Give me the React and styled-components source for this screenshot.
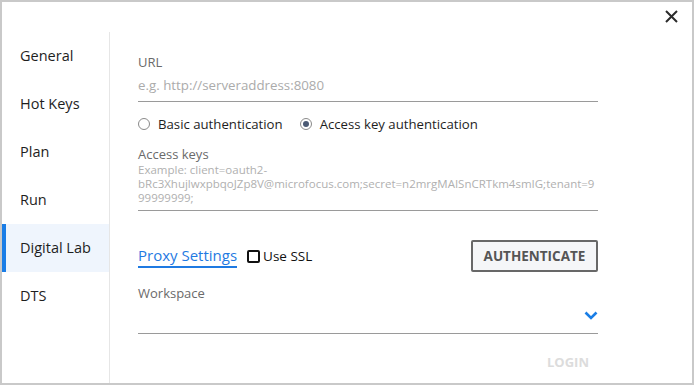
import React from 'react';
import styled, { createGlobalStyle } from 'styled-components';

const GlobalStyle = createGlobalStyle`
  html, body { margin: 0; padding: 0; background: #fff; }
  * { box-sizing: border-box; }
  body { font-family: "Open Sans", "Noto Sans", sans-serif; }
`;

const Window = styled.div`
  position: relative;
  width: 694px;
  height: 385px;
  border: 2px solid #c9c9c9;
  background: #fff;
  display: flex;
  flex-direction: column;
`;

const CloseButton = styled.button`
  position: absolute;
  top: 5px;
  right: 12px;
  width: 18px;
  height: 18px;
  padding: 0;
  border: 0;
  background: none;
  display: flex;
  align-items: center;
  justify-content: center;
  cursor: pointer;
`;

const Body = styled.div`
  display: flex;
  flex: 1;
  margin-top: 30px;
`;

const Sidebar = styled.nav`
  width: 108px;
  border-right: 1px solid #e6e6e6;
  display: flex;
  flex-direction: column;
`;

const NavItem = styled.div`
  height: 48px;
  display: flex;
  align-items: center;
  padding-left: 14px;
  padding-bottom: 1px;
  border-left: 4px solid ${(p) => (p.$active ? '#1a7de6' : 'transparent')};
  background: ${(p) => (p.$active ? '#eff5fd' : 'transparent')};
  font-size: 14.5px;
  color: #1e1e1e;
`;

const Content = styled.div`
  flex: 1;
  padding-left: 28px;
  padding-right: 94px;
  display: flex;
  flex-direction: column;
`;

const Label = styled.div`
  font-size: 13px;
  line-height: 18px;
  color: #6a6a6a;
  margin-top: ${(p) => p.$top || 0}px;
`;

const Input = styled.div`
  margin-top: 4px;
  font-size: 13.3px;
  line-height: 20px;
  color: #ababab;
  padding-bottom: 6px;
  border-bottom: 1px solid #9a9a9a;
`;

const RadioRow = styled.div`
  display: flex;
  align-items: center;
  gap: 17px;
  height: 20px;
  margin-top: 12px;
`;

const RadioOption = styled.label`
  display: flex;
  align-items: center;
  gap: 8px;
  font-size: 13.2px;
  color: #1e1e1e;
`;

const RadioCircle = styled.span`
  width: 12px;
  height: 12px;
  border-radius: 50%;
  border: 1px solid #8a8a8a;
  display: flex;
  align-items: center;
  justify-content: center;
  &::after {
    content: '';
    width: 6px;
    height: 6px;
    border-radius: 50%;
    background: ${(p) => (p.$checked ? '#4b5a74' : 'transparent')};
  }
`;

const KeyText = styled.div`
  font-size: 11.5px;
  line-height: 14px;
  color: #b0b0b0;
  padding-bottom: 5px;
  border-bottom: 1px solid #9a9a9a;
  white-space: nowrap;
  overflow: hidden;
`;

const ActionRow = styled.div`
  display: flex;
  align-items: center;
  height: 32px;
  margin-top: 29px;
`;

const ProxyLink = styled.a`
  font-size: 15px;
  line-height: 20px;
  color: #1f7ae2;
  border-bottom: 2px solid #1f7ae2;
  padding-bottom: 1px;
  margin-top: 0;
  text-decoration: none;
`;

const CheckLabel = styled.label`
  display: flex;
  align-items: center;
  gap: 3px;
  margin-left: 10px;
  font-size: 13.5px;
  color: #111;
`;

const CheckBox = styled.span`
  width: 13px;
  height: 13px;
  border: 2px solid #111;
  border-radius: 2px;
`;

const OutlineButton = styled.button`
  margin-left: auto;
  height: 32px;
  width: 127px;
  border: 2px solid #686868;
  border-radius: 2px;
  background: #f5f6f8;
  color: #555;
  font-family: inherit;
  font-weight: 700;
  font-size: 13.5px;
  padding: 0;
`;

const Select = styled.div`
  height: 32px;
  padding-bottom: 5px;
  border-bottom: 1px solid #9a9a9a;
  display: flex;
  align-items: center;
  justify-content: flex-end;
`;

const Footer = styled.div`
  display: flex;
  justify-content: flex-end;
  margin-top: 18px;
  padding-right: 9px;
`;

const TextButton = styled.button`
  border: 0;
  background: none;
  padding: 0;
  font-family: inherit;
  font-weight: 700;
  font-size: 13px;
  line-height: 20px;
  color: #dcdcdc;
`;

const navItems = ['General', 'Hot Keys', 'Plan', 'Run', 'Digital Lab', 'DTS'];

const App = () => {
  return (
    <>
      <GlobalStyle />
      <Window>
        <CloseButton aria-label="Close">
          <svg width="13" height="13" viewBox="0 0 13 13">
            <path d="M1 1L12 12M12 1L1 12" stroke="#2b2b2b" strokeWidth="2" />
          </svg>
        </CloseButton>
        <Body>
          <Sidebar>
            {navItems.map((item) => (
              <NavItem key={item} $active={item === 'Digital Lab'}>
                {item}
              </NavItem>
            ))}
          </Sidebar>
          <Content>
            <Label $top={21}>URL</Label>
            <Input>e.g. http://serveraddress:8080</Input>
            <RadioRow>
              <RadioOption>
                <RadioCircle />
                Basic authentication
              </RadioOption>
              <RadioOption>
                <RadioCircle $checked />
                Access key authentication
              </RadioOption>
            </RadioRow>
            <Label $top={11}>Access keys</Label>
            <KeyText>
              Example: client=oauth2-
              <br />
              bRc3XhujlwxpbqoJZp8V@microfocus.com;secret=n2mrgMAISnCRTkm4smIG;tenant=9
              <br />
              99999999;
            </KeyText>
            <ActionRow>
              <ProxyLink>Proxy Settings</ProxyLink>
              <CheckLabel>
                <CheckBox />
                Use SSL
              </CheckLabel>
              <OutlineButton>AUTHENTICATE</OutlineButton>
            </ActionRow>
            <Label $top={12}>Workspace</Label>
            <Select>
              <svg width="14" height="9" viewBox="0 0 14 9">
                <path d="M1.5 1.5L7 7L12.5 1.5" fill="none" stroke="#1a7ee6" strokeWidth="2.6" />
              </svg>
            </Select>
            <Footer>
              <TextButton>LOGIN</TextButton>
            </Footer>
          </Content>
        </Body>
      </Window>
    </>
  );
};

export default App;
